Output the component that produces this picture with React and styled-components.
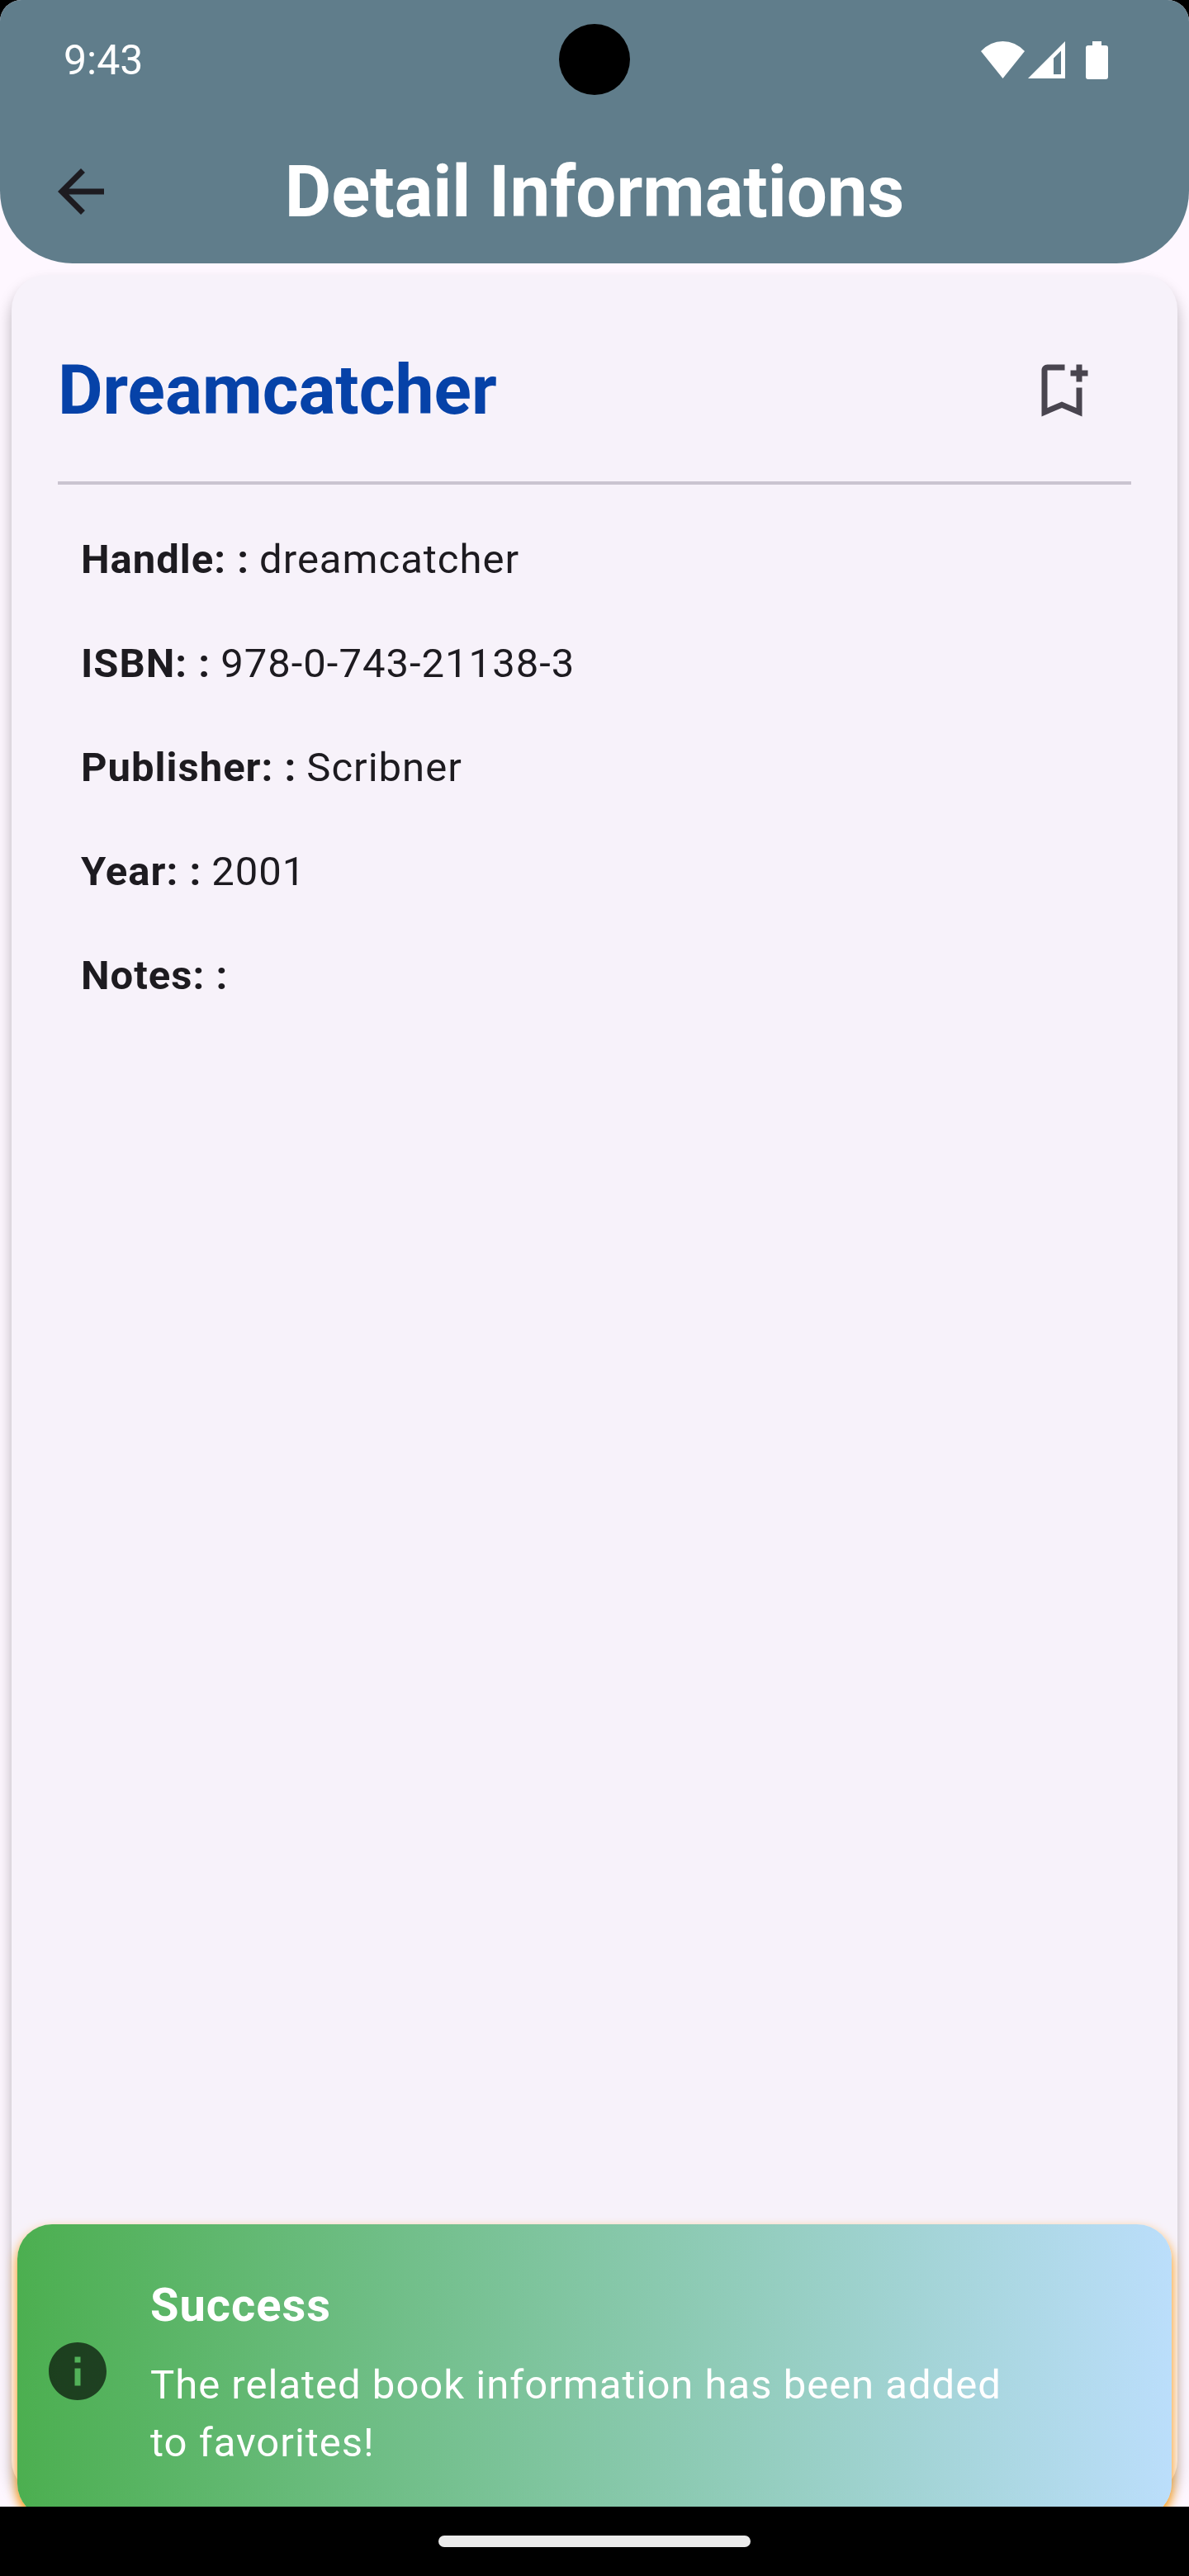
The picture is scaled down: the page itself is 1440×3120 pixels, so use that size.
import React from "react";
import styled, { createGlobalStyle } from "styled-components";

const GlobalStyle = createGlobalStyle`
  * { box-sizing: border-box; }
  body {
    margin: 0;
    background: #000;
    font-family: Roboto, "Noto Sans", sans-serif;
    color: #1d1b20;
  }
`;

const Device = styled.div`
  display: flex;
  flex-direction: column;
  min-height: 100vh;
  background: #000;
`;

const Screen = styled.div`
  flex: 1;
  display: flex;
  flex-direction: column;
  overflow: hidden;
  border-radius: 26px 26px 0 0;
  background: #fef7ff;
`;

const Header = styled.header`
  background: #607d8b;
  border-radius: 0 0 88px 88px;
  color: #fff;
`;

const StatusBar = styled.div`
  position: relative;
  display: flex;
  align-items: center;
  justify-content: space-between;
  height: 145px;
  padding: 0 98px 0 77px;
`;

const Clock = styled.time`
  font-size: 50px;
  line-height: 70px;
`;

const Camera = styled.div`
  position: absolute;
  top: 29px;
  left: calc(50% - 43px);
  width: 86px;
  height: 86px;
  border-radius: 50%;
  background: #000;
`;

const StatusIcons = styled.div`
  display: flex;
  align-items: center;
  gap: ${(p) => p.$gap}px;
`;

const Toolbar = styled.div`
  display: grid;
  grid-template-columns: 168px 1fr 168px;
  align-items: center;
  height: 174px;
  padding: 0 14px;
`;

const Title = styled.h1`
  margin: 0;
  font-size: 87px;
  line-height: 112px;
  font-weight: 700;
  text-align: center;
  white-space: nowrap;
`;

const IconButton = styled.button`
  display: flex;
  align-items: center;
  justify-content: center;
  width: 168px;
  height: 168px;
  padding: 0;
  border: 0;
  border-radius: 50%;
  background: none;
  color: ${(p) => p.$color};
  cursor: pointer;
`;

const Main = styled.main`
  position: relative;
  flex: 1;
  display: flex;
  padding: 14px;
  overflow: hidden;
`;

const Card = styled.article`
  flex: 1;
  padding: 56px;
  border-radius: 42px;
  background: #f7f2fa;
  box-shadow: 0 12px 18px rgba(0, 0, 0, 0.28);
`;

const CardHeader = styled.div`
  display: flex;
  align-items: center;
  justify-content: space-between;
`;

const BookTitle = styled.h2`
  margin: 0;
  font-size: 84px;
  line-height: 112px;
  font-weight: 700;
  color: #0642a8;
`;

const Divider = styled.hr`
  height: 4px;
  margin: 26px 0;
  border: 0;
  background: #cac4d0;
`;

const Details = styled.dl`
  display: flex;
  flex-direction: column;
  gap: 56px;
  margin: 0;
  padding: 30px 28px;
`;

const Detail = styled.div`
  display: flex;
  gap: 12px;
  font-size: 49px;
  line-height: 70px;
  letter-spacing: 1px;
`;

const Label = styled.dt`
  font-weight: 700;
`;

const Value = styled.dd`
  margin: 0;
`;

const Toast = styled.div`
  position: absolute;
  left: 21px;
  right: 21px;
  bottom: -14px;
  display: flex;
  align-items: center;
  gap: 46px;
  padding: 56px 182px 56px 31px;
  border-radius: 42px;
  background: linear-gradient(90deg, #4caf50, #bbdefb);
  box-shadow: 0 7px 14px #ff9800;
  color: #fff;
`;

const ToastText = styled.div`
  flex: 1;
  display: flex;
  flex-direction: column;
  gap: 20px;
`;

const ToastTitle = styled.strong`
  font-size: 56px;
  line-height: 84px;
  font-weight: 700;
  letter-spacing: 1px;
`;

const ToastMessage = styled.p`
  margin: 0;
  font-size: 49px;
  line-height: 70px;
  letter-spacing: 1px;
`;

const NavigationBar = styled.div`
  display: flex;
  align-items: center;
  justify-content: center;
  height: 84px;
`;

const HomeHandle = styled.div`
  width: 378px;
  height: 14px;
  border-radius: 7px;
  background: #ebebeb;
`;

const Glyph = styled.svg`
  display: block;
  flex: none;
  fill: currentColor;
`;

const Icon = ({ d, color }) => (
  <Glyph width="84" height="84" viewBox="0 0 24 24" color={color} aria-hidden="true">
    <path d={d} />
  </Glyph>
);

const ARROW_BACK = "M20 11H7.83l5.59-5.59L12 4l-8 8 8 8 1.41-1.41L7.83 13H20v-2z";
const BOOKMARK_ADD =
  "M17 11v6.97l-5-2.14-5 2.14V5h6V3H7c-1.1 0-2 .9-2 2v16l7-3 7 3V11h-2zm4-4h-2v2h-2V7h-2V5h2V3h2v2h2v2z";
const INFO =
  "M12 2C6.48 2 2 6.48 2 12s4.48 10 10 10 10-4.48 10-10S17.52 2 12 2zm1 15h-2v-6h2v6zm0-8h-2V7h2v2z";

const details = [
  ["Handle:", "dreamcatcher"],
  ["ISBN:", "978-0-743-21138-3"],
  ["Publisher:", "Scribner"],
  ["Year:", "2001"],
  ["Notes:", ""],
];

export default function App() {
  return (
    <Device>
      <GlobalStyle />
      <Screen>
        <Header>
          <StatusBar>
            <Clock>9:43</Clock>
            <Camera />
            <StatusIcons $gap={25}>
              <StatusIcons $gap={4}>
                <Glyph width="53" height="45" viewBox="0 0 53 45" aria-label="Wi-Fi">
                  <path d="M0 12Q11.500 0 26.500 0T53 12L26.500 45Z" />
                </Glyph>
                <Glyph width="45" height="45" viewBox="0 0 45 45" aria-label="Signal">
                  <path fillRule="evenodd" d="M45 0V45H0ZM40 11.500L31 20.500V40H40Z" />
                </Glyph>
              </StatusIcons>
              <Glyph width="27" height="46" viewBox="0 0 27 46" aria-label="Battery">
                <path d="M8 0H19V5H24Q27 5 27 8V43Q27 46 24 46H3Q0 46 0 43V8Q0 5 3 5H8Z" />
              </Glyph>
            </StatusIcons>
          </StatusBar>
          <Toolbar>
            <IconButton type="button" aria-label="Back" $color="#1d1b20">
              <Icon d={ARROW_BACK} />
            </IconButton>
            <Title>Detail Informations</Title>
          </Toolbar>
        </Header>
        <Main>
          <Card>
            <CardHeader>
              <BookTitle>Dreamcatcher</BookTitle>
              <IconButton type="button" aria-label="Add to favorites" $color="#49454f">
                <Icon d={BOOKMARK_ADD} />
              </IconButton>
            </CardHeader>
            <Divider />
            <Details>
              {details.map(([label, value]) => (
                <Detail key={label}>
                  <Label>{label} :</Label>
                  <Value>{value}</Value>
                </Detail>
              ))}
            </Details>
          </Card>
          <Toast role="status">
            <Icon d={INFO} color="rgba(0, 0, 0, 0.64)" />
            <ToastText>
              <ToastTitle>Success</ToastTitle>
              <ToastMessage>The related book information has been added to favorites!</ToastMessage>
            </ToastText>
          </Toast>
        </Main>
      </Screen>
      <NavigationBar>
        <HomeHandle />
      </NavigationBar>
    </Device>
  );
}
